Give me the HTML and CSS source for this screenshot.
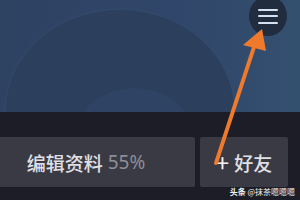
FILE: index.html
```html
<!DOCTYPE html>
<html lang="zh">
<head>
<meta charset="utf-8">
<link rel="stylesheet" href="styles.css">
</head>
<body>
<div class="page">
  <header class="hero">
    <div class="ring ring-big"></div>
    <div class="ring ring-small"></div>
    <button class="menu" aria-label="菜单">
      <span class="bar"></span><span class="bar"></span><span class="bar"></span>
    </button>
  </header>
  <section class="actions">
    <button class="btn btn-edit">编辑资料 <span class="pct">55%</span></button>
    <button class="btn btn-add"><span class="plus">+</span>好友</button>
  </section>
  <div class="watermark"><b>头条</b> @抹茶嗯嗯嗯</div>
  <svg class="arrow" width="300" height="200" viewBox="0 0 300 200">
    <line x1="216" y1="163" x2="255" y2="44" stroke="#f07a2c" stroke-width="4" stroke-linecap="round"/>
    <polygon points="262,29 243,45 266,51" fill="#f07a2c"/>
  </svg>
</div>
</body>
</html>
```
FILE: styles.css
```css
html, body {
  margin: 0;
  padding: 0;
  background: #1c1d27;
}
.page {
  position: relative;
  width: 300px;
  height: 200px;
  overflow: hidden;
  font-family: "Noto Sans CJK SC", "Noto Sans", sans-serif;
}
.hero {
  position: relative;
  height: 112px;
  background: linear-gradient(90deg, #2e4262 0%, #30466a 60%, #34506f 100%);
  overflow: hidden;
}
.ring {
  position: absolute;
  border-radius: 50%;
}
.ring-big {
  left: 6px;
  top: 10px;
  width: 228px;
  height: 200px;
  background: #2c3f5c;
  box-shadow: 0 0 0 2px rgba(55, 78, 110, 0.4);
}
.ring-small {
  left: 74px;
  top: 88px;
  width: 120px;
  height: 100px;
  background: #2f4364;
}
.menu {
  position: absolute;
  right: 13px;
  top: -4px;
  width: 38px;
  height: 40px;
  border: none;
  border-radius: 50%;
  background: #212c3f;
  padding: 0;
  display: flex;
  flex-direction: column;
  justify-content: center;
  align-items: center;
  gap: 4.5px;
}
.bar {
  display: block;
  width: 20px;
  height: 2px;
  border-radius: 1px;
  background: #d6e0f0;
}
.actions {
  display: flex;
  gap: 5px;
  padding: 25px 12px 0 0;
}
.btn {
  height: 50px;
  border: none;
  border-radius: 2px;
  background: #3a3a45;
  color: #e0e0e4;
  font-family: "Noto Sans CJK SC", "Noto Sans", sans-serif;
  font-size: 19px;
  font-weight: 500;
  padding: 0;
  display: flex;
  align-items: center;
  justify-content: center;
}
.btn-edit {
  width: 195px;
  padding-right: 23px;
  border-radius: 0 2px 2px 0;
}
.pct {
  color: #8e8e98;
  margin-left: 5px;
  font-family: "Noto Sans", sans-serif;
  font-weight: 400;
}
.btn-add {
  width: 88px;
}
.plus {
  font-size: 24px;
  margin-right: 5px;
  font-weight: 400;
  line-height: 1;
  color: #f4f4f6;
}
.watermark {
  position: absolute;
  right: 5px;
  bottom: 4px;
  font-size: 8px;
  color: #f2f2f2;
  line-height: 1;
}
.arrow {
  position: absolute;
  left: 0;
  top: 0;
  pointer-events: none;
}
```
